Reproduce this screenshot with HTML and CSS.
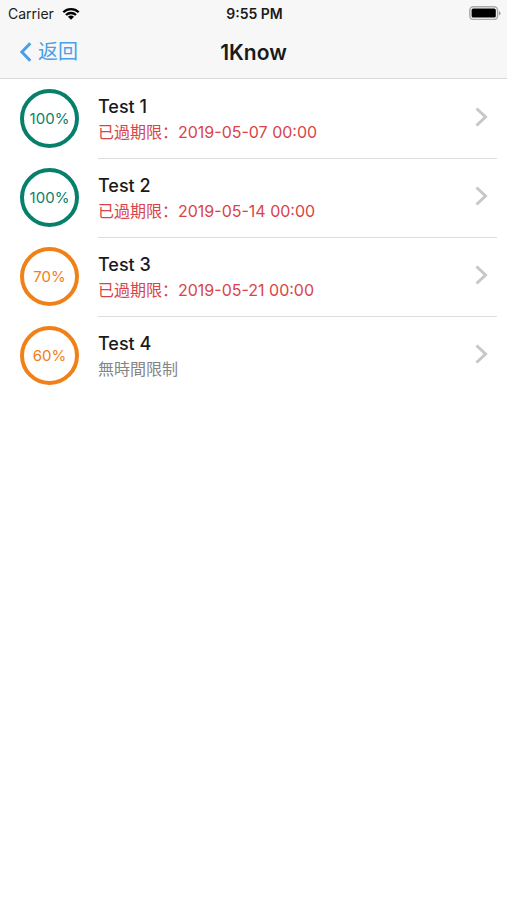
FILE: index.html
```html
<!DOCTYPE html>
<html lang="zh">
<head>
    <meta charset="UTF-8">
    <meta name="viewport" content="width=device-width, initial-scale=1.0">
    <title>1Know</title>
    <link rel="stylesheet" href="styles.css">
</head>
<body>
    <header class="header">
        <div class="status-bar">
            <div class="carrier">
                <span>Carrier</span>
                <svg class="wifi" viewBox="0 0 18 13" width="18" height="13">
                    <path d="M1.3 5.2a11 11 0 0 1 15.4 0M4 8a7.2 7.2 0 0 1 10 0" fill="none" stroke="#000" stroke-width="2.3"/>
                    <path d="M9 12.8 5.9 9.8a4.6 4.6 0 0 1 6.2 0z"/>
                </svg>
            </div>
            <div class="time">9:55 PM</div>
            <svg class="battery" viewBox="0 0 32 14" width="32" height="14">
                <rect x="0.8" y="0.8" width="27.8" height="12.6" rx="3.6" fill="#f7f7f7" stroke="#aaa" stroke-width="1.5"/>
                <rect x="2.6" y="2.6" width="24.2" height="9" rx="1.6"/>
                <path d="M30 5v4.4q1.5-.8 1.5-2.2T30 5z" fill="#999"/>
            </svg>
        </div>
        <nav class="nav-bar">
            <button class="back" type="button">
                <svg viewBox="0 0 12 20" width="12" height="20">
                    <path d="M10.3 1.2 1.9 10l8.4 8.8" fill="none" stroke="currentColor" stroke-width="3"/>
                </svg>
                <span>返回</span>
            </button>
            <h1 class="title">1Know</h1>
        </nav>
    </header>

    <main class="list">
        <a class="row" href="#test1">
            <span class="progress done">100%</span>
            <span class="content">
                <span class="info">
                    <span class="name">Test 1</span>
                    <span class="deadline overdue">已過期限：2019-05-07 00:00</span>
                </span>
                <svg class="arrow" viewBox="0 0 13 20" width="13" height="20">
                    <path d="M1.5 1.5 10.5 10l-9 8.5"/>
                </svg>
            </span>
        </a>
        <a class="row" href="#test2">
            <span class="progress done">100%</span>
            <span class="content">
                <span class="info">
                    <span class="name">Test 2</span>
                    <span class="deadline overdue">已過期限：2019-05-14 00:00</span>
                </span>
                <svg class="arrow" viewBox="0 0 13 20" width="13" height="20">
                    <path d="M1.5 1.5 10.5 10l-9 8.5"/>
                </svg>
            </span>
        </a>
        <a class="row" href="#test3">
            <span class="progress">70%</span>
            <span class="content">
                <span class="info">
                    <span class="name">Test 3</span>
                    <span class="deadline overdue">已過期限：2019-05-21 00:00</span>
                </span>
                <svg class="arrow" viewBox="0 0 13 20" width="13" height="20">
                    <path d="M1.5 1.5 10.5 10l-9 8.5"/>
                </svg>
            </span>
        </a>
        <a class="row" href="#test4">
            <span class="progress">60%</span>
            <span class="content">
                <span class="info">
                    <span class="name">Test 4</span>
                    <span class="deadline">無時間限制</span>
                </span>
                <svg class="arrow" viewBox="0 0 13 20" width="13" height="20">
                    <path d="M1.5 1.5 10.5 10l-9 8.5"/>
                </svg>
            </span>
        </a>
    </main>
</body>
</html>
```

FILE: styles.css
```css
* {
    box-sizing: border-box;
}
body {
    font-family: Inter, "Noto Sans CJK SC", sans-serif;
    margin: 0;
    background-color: #fff;
    color: #1a1a1a;
}
.header {
    background-color: #f7f7f7;
    border-bottom: 1px solid #d8d8d8;
}
.status-bar {
    display: grid;
    grid-template-columns: 1fr auto 1fr;
    align-items: center;
    height: 26px;
    padding: 0 6px 0 8px;
    font-size: 14px;
}
.carrier {
    display: flex;
    align-items: center;
    gap: 8px;
}
.time {
    font-weight: 600;
}
.battery {
    justify-self: end;
}
.nav-bar {
    display: grid;
    grid-template-columns: 1fr auto 1fr;
    align-items: center;
    height: 52px;
    padding: 0 20px;
}
.back {
    display: flex;
    align-items: center;
    justify-self: start;
    gap: 6px;
    padding: 0;
    border: none;
    background: none;
    color: #4a9fea;
    font-family: inherit;
    font-size: 20px;
    line-height: 28px;
    cursor: pointer;
}
.title {
    margin: 0;
    font-size: 21px;
    font-weight: 600;
}
.list {
    padding-top: 1px;
}
.row {
    display: flex;
    align-items: flex-start;
    gap: 19px;
    padding: 0 10px 0 20px;
    color: inherit;
    text-decoration: none;
}
.progress {
    display: flex;
    align-items: center;
    justify-content: center;
    width: 59px;
    height: 59px;
    margin-top: 9px;
    border: 4px solid #f08018;
    border-radius: 50%;
    color: #f08018;
    font-size: 15px;
}
.progress.done {
    border-color: #087f6b;
    color: #087f6b;
}
.content {
    display: flex;
    flex: 1;
    align-items: center;
    justify-content: space-between;
    height: 79px;
    padding-right: 9px;
    border-bottom: 1px solid #ddd;
}
.row:last-child .content {
    border-bottom-color: transparent;
}
.info {
    display: flex;
    flex-direction: column;
}
.name {
    font-size: 18px;
    font-weight: 500;
    line-height: 26px;
}
.deadline {
    color: #858585;
    font-size: 16px;
    line-height: 24px;
}
.deadline.overdue {
    color: #d94448;
}
.arrow {
    margin-bottom: 4px;
    fill: none;
    stroke: #c7c7c7;
    stroke-width: 3;
}
```
